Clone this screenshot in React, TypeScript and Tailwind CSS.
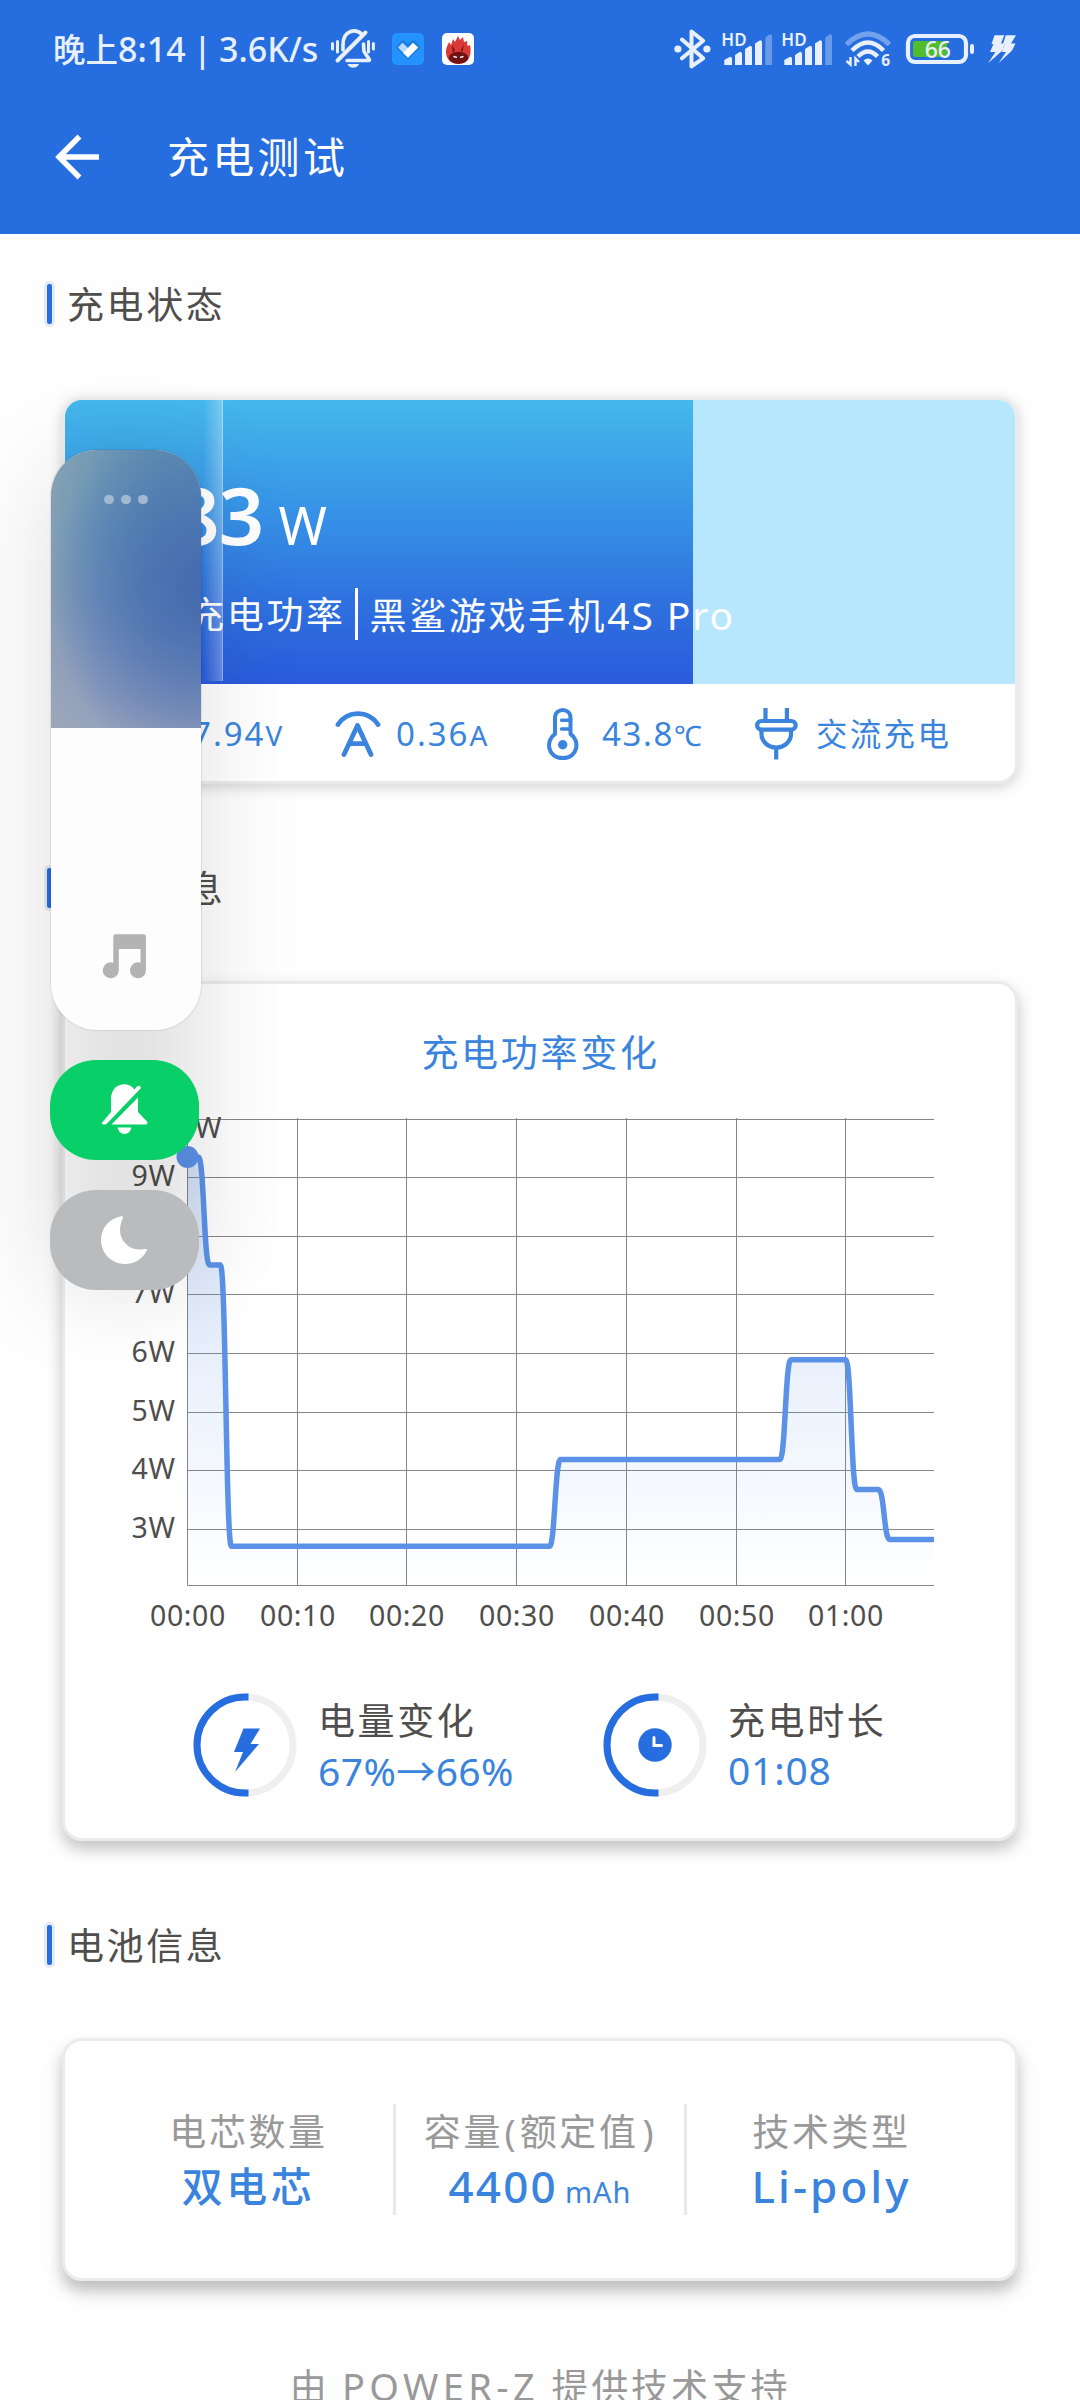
import type { ReactNode } from 'react'

type Point = { minute: number; y: number }

// chart geometry, in page pixels
const CHART_LEFT = 187.5
const CHART_RIGHT = 934
const CHART_BOTTOM = 1585.5
const MINUTE_WIDTH = 10.97

const points: Point[] = [
  { minute: 0, y: 1157 },
  { minute: 1, y: 1157 },
  { minute: 2, y: 1265 },
  { minute: 3, y: 1265 },
  { minute: 4, y: 1546.3 },
  { minute: 33, y: 1546.3 },
  { minute: 34, y: 1459.6 },
  { minute: 54, y: 1459.6 },
  { minute: 55, y: 1359.7 },
  { minute: 60, y: 1359.7 },
  { minute: 61, y: 1489.5 },
  { minute: 63, y: 1489.5 },
  { minute: 64, y: 1539.5 },
  { minute: 68.05, y: 1539.5 },
]

const rows = [
  { y: 1119.5, label: '' },
  { y: 1177.5, label: '9W' },
  { y: 1236.5, label: '8W' },
  { y: 1294.5, label: '7W' },
  { y: 1353.5, label: '6W' },
  { y: 1412.5, label: '5W' },
  { y: 1470.5, label: '4W' },
  { y: 1529.5, label: '3W' },
  { y: 1585.5, label: '' },
]

const columns = [
  { x: 187.5, label: '00:00' },
  { x: 297.5, label: '00:10' },
  { x: 406.5, label: '00:20' },
  { x: 516.5, label: '00:30' },
  { x: 626.5, label: '00:40' },
  { x: 736.5, label: '00:50' },
  { x: 845.5, label: '01:00' },
]

const px = (minute: number) => CHART_LEFT + minute * MINUTE_WIDTH

const linePath = points.reduce((d, p, i) => {
  if (i === 0) return `M${px(p.minute)} ${p.y}`
  const prev = points[i - 1]
  const mid = (px(prev.minute) + px(p.minute)) / 2
  return `${d} C${mid} ${prev.y} ${mid} ${p.y} ${px(p.minute)} ${p.y}`
}, '')

const areaPath = `${linePath} V${CHART_BOTTOM} H${CHART_LEFT} Z`

function MutedBellOutline() {
  return (
    <svg className="h-[40px] w-[46px]" viewBox="330 30 46 40" fill="none" stroke="#e8f0fd" strokeWidth="3.6" strokeLinecap="round">
      <path d="M332.5 44.5V50M337.5 42.5V53M368.5 42.5V53M373.4 44.5V50" strokeWidth="3" />
      <path d="M365.5 33.5L337.5 61.5" strokeWidth="4" />
      <path d="M343 51V45.5C343 31 356 29.5 361.5 35M363.500 45L364 52.5L369 60Q370 61.5 368.500 61.5H347" />
      <path d="M347.5 65H359Q357.5 68.800 353.2 68.800T347.5 65Z" fill="#e8f0fd" stroke="none" />
    </svg>
  )
}

function HeartApp() {
  return (
    <svg className="ml-[16px] h-[32px] w-[32px]" viewBox="0 0 32 32">
      <rect width="32" height="32" rx="5" fill="#2493ff" />
      <path d="M3.500 14.500L9.500 7.500H12.500L16 11L20 7.500H23L28.500 14.500L16 27Z" fill="#1b7fe0" />
      <path d="M6 14.500L10.500 9.700L16.500 15.500L11.500 20Z" fill="#b9dbfb" />
      <path d="M11 20L21 9.700L26.200 14.500L16 24.700Z" fill="#fff" />
    </svg>
  )
}

function FlameApp() {
  return (
    <svg className="ml-[18px] h-[32px] w-[32px]" viewBox="0 0 32 32">
      <rect width="32" height="32" rx="5" fill="#fff" />
      <path d="M16 31C8 31 4 25 4 19C4 14 6 12 7 9L9 12L11 6L13 9L16 3L18 7L21 4L22 9L25 8L25.500 13L28 12C30 22 27 31 16 31Z" fill="#d93a36" />
      <path d="M11 20L10 12L13 17ZM20 20L22 11L19 17Z" fill="#6e1214" />
      <ellipse cx="16.500" cy="24.800" rx="9.800" ry="6" fill="#6e1214" />
      <path d="M11.500 23.500L15 24.300M21.500 23.500L18 24.300" stroke="#fff" strokeWidth="1.300" />
    </svg>
  )
}

function BluetoothIcon() {
  return (
    <svg className="h-[40px] w-[37px]" viewBox="674.500 29 37 40" fill="none" stroke="#e8f0fd" strokeWidth="4" strokeLinecap="round" strokeLinejoin="round">
      <path d="M682.500 39.500L703.600 58.300L692 66.300V31.500L703.600 40.700L682.500 58.300" />
      <circle cx="678.400" cy="49" r="3.600" fill="#e8f0fd" stroke="none" />
      <circle cx="707.400" cy="49" r="3.600" fill="#e8f0fd" stroke="none" />
    </svg>
  )
}

function SignalIcon() {
  return (
    <svg className="h-[44px] w-[52px]" viewBox="721 27 52 44" fill="#e8f0fd">
      <text x="721.300" y="45.500" className="text-[17px] font-semibold">HD</text>
      <path d="M724.300 65V60L730 56.700Q732 56.700 732 58.500V65Z" />
      <path d="M735 65V55L740 51.700Q742 51.700 742 53.500V65Z" />
      <path d="M745 65V49L750 45.700Q752 45.700 752 47.500V65Z" />
      <path d="M755 65V43.500L760 40.200Q762 40.200 762 42V65Z" />
      <path d="M765.300 65V37.500L770 34.300Q772 34.300 772 36V65Z" opacity=".35" />
    </svg>
  )
}

function WifiIcon() {
  return (
    <svg className="ml-[11px] h-[44px] w-[49px]" viewBox="844 28 49 44" fill="none" stroke="#e8f0fd" strokeWidth="4.500">
      <path d="M846.500 45.500Q868 24.500 889.500 45.500" opacity=".4" strokeWidth="5" />
      <path d="M852 51.500Q868 35.500 883.500 51.500" />
      <path d="M858 57.500Q868 47.500 877.500 57.500" />
      <path d="M863.500 61.500Q868 57.500 872.500 61.500L868 66.500Z" fill="#e8f0fd" stroke="none" />
      <path d="M850.500 58V65.500L846.500 62M855.500 67V59.500L859 63" strokeWidth="2.400" />
      <text x="881.300" y="67" className="text-[15.500px] font-bold" fill="#e8f0fd" stroke="none">6</text>
    </svg>
  )
}

function BatteryIcon() {
  return (
    <svg className="ml-[12px] h-[32px] w-[70px]" viewBox="905 33 70 32">
      <rect x="908" y="36" width="58" height="26" rx="7" fill="none" stroke="#e8f0fd" strokeWidth="4.200" />
      <rect x="913" y="41" width="34" height="16" rx="2" fill="#52bd2b" />
      <rect x="970" y="44" width="4" height="10" rx="2" fill="#e8f0fd" />
      <text x="937.800" y="57.700" textAnchor="middle" className="text-[23px] font-medium" fill="#e8f0fd">66</text>
    </svg>
  )
}

function FlashIcon() {
  return (
    <svg className="ml-[13px] h-[30px] w-[29px]" viewBox="988 34 29 30" fill="#e8f0fd">
      <path d="M994.500 35.300H1004.300L1001 43.500H1004.500L1002.500 50.500L988 63.300L995.500 52H990L993.500 44H991.500Z" />
      <path d="M1005.800 35.300H1016L1011 43.500H1015.500L1012 50.500L998.500 63.300L1006 52H1002L1004.500 44H1003Z" />
    </svg>
  )
}

function CurrentIcon() {
  return (
    <svg className="h-[48px] w-[46px]" viewBox="335.500 710 46 48" fill="none" stroke="#3a84dd" strokeWidth="4.800" strokeLinecap="round" strokeLinejoin="round">
      <path d="M338.500 724.500C348 710 369 710 378.500 724.500" />
      <path d="M344.500 754.500L358 725.500L371.500 754.500M350 743.700H366" />
    </svg>
  )
}

function ThermometerIcon() {
  return (
    <svg className="h-[54px] w-[33px]" viewBox="546 707 33 54" fill="none" stroke="#3a84dd" strokeWidth="4" strokeLinecap="round">
      <path d="M555 718C555 707.300 570.500 707.300 570.500 718V734C580 740 578.500 758 562.700 758S545.500 740 555 734Z" strokeLinejoin="round" />
      <path d="M561.500 720.300H570M561.500 729H570" strokeWidth="3.400" />
      <circle cx="562.700" cy="744.700" r="4.700" fill="#3a84dd" stroke="none" />
    </svg>
  )
}

function PlugIcon() {
  return (
    <svg className="h-[53px] w-[45px]" viewBox="754.500 707 45 53" fill="none" stroke="#3a84dd" strokeWidth="4.200">
      <path d="M766 708V720M787.400 708V720M776.700 748V759.500" />
      <rect x="757.600" y="721" width="38.600" height="8.600" rx="4.300" />
      <path d="M762 730V734C762 741 768 747.500 776.700 747.500S791.500 741 791.500 734V730" />
    </svg>
  )
}

function Ring({ children }: { children: ReactNode }) {
  return (
    <svg className="h-[104px] w-[104px] shrink-0" viewBox="0 0 104 104">
      <circle cx="52" cy="52" r="48" fill="none" stroke="#efefef" strokeWidth="7" />
      <path d="M55.500 4H52A48 48 0 0 0 52 100H55.500" fill="none" stroke="#266de0" strokeWidth="7" />
      {children}
    </svg>
  )
}

function SectionTitle({ title }: { title: string }) {
  return (
    <div className="flex h-[46px] items-center pl-[44px]">
      <span className="h-[46px] w-[11px] rounded-[5px] border-[3px] border-[#e6eaf3] bg-[#266de0]" />
      <h2 className="ml-[12px] text-[37px] leading-none tracking-[2.600px] text-[#4f4e4c]">{title}</h2>
    </div>
  )
}

function PowerChart() {
  return (
    <svg className="block h-[540px] w-[950px]" viewBox="65 1100 950 540">
      <defs>
        <linearGradient id="area" gradientUnits="userSpaceOnUse" x1="0" y1="1120" x2="0" y2="1585">
          <stop offset="0" stopColor="#5b93ea" stopOpacity=".28" />
          <stop offset=".5" stopColor="#5b93ea" stopOpacity=".14" />
          <stop offset="1" stopColor="#5b93ea" stopOpacity="0" />
        </linearGradient>
      </defs>
      <g stroke="#868686" strokeWidth="1">
        {rows.map(r => <path key={r.y} d={`M${CHART_LEFT} ${r.y}H${CHART_RIGHT}`} />)}
        {columns.map(c => <path key={c.x} d={`M${c.x} 1118V${CHART_BOTTOM}`} />)}
      </g>
      <path d={areaPath} fill="url(#area)" />
      <path d={linePath} fill="none" stroke="#5b92e8" strokeWidth="5.500" />
      <circle cx={CHART_LEFT} cy="1157" r="11" fill="#5b92e8" />
      <g className="text-[28.500px]" fill="#4f4e4c">
        <text x="221.500" y="1138" textAnchor="end">10W</text>
        {rows.map(r => <text key={r.y} x="175.500" y={r.y + 8.500} textAnchor="end" letterSpacing=".600">{r.label}</text>)}
        {columns.map(c => <text key={c.x} x={c.x + 0.5} y="1625.500" textAnchor="middle" letterSpacing=".600">{c.label}</text>)}
      </g>
    </svg>
  )
}

function VolumePanel() {
  return (
    <div className="absolute left-[50px] top-[450px] w-[152px]">
      {/* soft shadow behind the whole stack */}
      <div className="absolute left-0 top-[20px] h-[820px] w-[152px] rounded-[48px] bg-black/12 blur-[48px]" />
      <div className="relative ml-px flex h-[580px] w-[150px] flex-col overflow-hidden rounded-[46px] bg-[#fdfdfd] shadow-[0_0_1px_1px_rgba(0,0,0,0.080)]">
        <div className="flex h-[278px] justify-center gap-[7.500px] bg-[radial-gradient(ellipse_150px_185px_at_100%_50%,#456aae_0%,rgba(72,110,175,0.700)_40%,rgba(80,120,178,0)_100%),linear-gradient(90deg,rgba(165,175,182,0.550)_0%,rgba(150,170,190,0.250)_35%,rgba(120,150,190,0)_70%),linear-gradient(180deg,#6292b0_0%,#568bb4_30%,#6388b8_55%,#7c90bc_75%,#959fbb_100%)] pt-[44.500px]">
          <span className="size-[9.500px] rounded-full bg-[#a0b9d1]" />
          <span className="size-[9.500px] rounded-full bg-[#a0b9d1]" />
          <span className="size-[9.500px] rounded-full bg-[#a0b9d1]" />
        </div>
        <svg className="ml-[51px] mt-[205px] h-[46px] w-[46px]" viewBox="102 933 46 46" fill="#b3b3b3">
          <path d="M113.300 937Q113.300 934.300 116 934.300H143.300Q146 934.300 146 937V970.300A8 8 0 1 1 140.500 962.700V949H118.800V970.300A8 8 0 1 1 113.300 962.700Z" />
        </svg>
      </div>
      <button className="relative mt-[30px] block h-[100px] w-[149px] rounded-[46px] bg-[#08cf67]">
        <svg className="ml-[50px] h-[52px] w-[50px]" viewBox="100 1084 50 52" fill="#fff">
          <path d="M103 1121.500L111 1112V1099C111 1083 128 1080.500 134.500 1089.500L137 1086.500Q140 1084.500 141 1088L106.500 1124Q102.500 1125.500 101.500 1123Z" />
          <path d="M138 1097.500V1112L147 1121.500Q148.500 1124.500 145.500 1124.500H111.500ZM117.500 1127.500H131.500Q130 1134 124.500 1134T117.500 1127.500Z" />
        </svg>
      </button>
      <button className="relative mt-[30px] block h-[100px] w-[149px] rounded-[46px] bg-[#b9bbbc]">
        <svg className="ml-[50px] h-[52px] w-[50px]" viewBox="100 1214 50 52" fill="#fff">
          <path d="M121 1216.300Q124 1215.500 122.500 1219C114 1238 129 1252.500 144.500 1249Q148 1248 146.500 1251C142 1260 133.500 1264 125 1264C111.500 1264 101 1253 101 1240C101 1228 109.500 1218.500 121 1216.300Z" />
        </svg>
      </button>
    </div>
  )
}

export default function App() {
  return (
    <div className="relative h-[2400px] w-[1080px] overflow-hidden bg-[#fefefe] font-['Noto_Sans','Noto_Sans_CJK_SC',sans-serif]">
      <header className="h-[234px] bg-[#266de0]">
        <div className="flex h-[98px] items-center pl-[53px] text-[#e8f0fd]">
          <span className="w-[277px] whitespace-nowrap text-[34px] font-medium leading-none [word-spacing:-1.500px]"><span className="text-[32.500px]">晚上</span>8:14 | 3.6K/s</span>
          <MutedBellOutline />
          <HeartApp />
          <FlameApp />
          <div className="ml-auto flex items-center pr-[63px]">
            <BluetoothIcon />
            <span className="ml-[10px] flex gap-[8px]">
              <SignalIcon />
              <SignalIcon />
            </span>
            <WifiIcon />
            <BatteryIcon />
            <FlashIcon />
          </div>
        </div>
        <div className="flex h-[118px] items-center pl-[54px] text-white">
          <svg className="h-[46px] w-[46px]" viewBox="0 0 46 46" fill="none" stroke="#fff" strokeWidth="5.500">
            <path d="M25.500 2.500L5 23L25.500 43.500M4 23H45" />
          </svg>
          <h1 className="ml-[67px] text-[42px] leading-none tracking-[3.300px]">充电测试</h1>
        </div>
      </header>

      <main className="pt-[47px]">
        <SectionTitle title="充电状态" />
        <section className="mx-[62px] mt-[70px] h-[387px] overflow-hidden rounded-[20px] border-[3px] border-[#ebebeb] bg-white shadow-[0_3px_14px_rgba(0,0,0,0.180)]">
          <div className="relative h-[284px] bg-[#b7e7ff]">
            <div className="absolute left-0 top-0 h-full w-[628px] bg-[linear-gradient(180deg,#44b8eb_0%,#3690e6_42%,#2f72df_70%,#2a5bdc_100%)]" />
            <div className="relative pl-[43px] pt-[74px] text-white">
              <div className="flex h-[84px] items-baseline">
                <span className="text-[80px] font-semibold leading-none tracking-[-1px]">2.83</span>
                <span className="ml-[15px] text-[52px] leading-none">W</span>
              </div>
              <div className="mt-[30px] flex h-[52px] items-center text-[37px] leading-none tracking-[2.600px]">
                <span>实时充电功率</span>
                <span className="ml-[9px] h-[52px] w-[3px] bg-white" />
                <span className="ml-[12px] whitespace-nowrap">黑鲨游戏手机<span className="text-[39px] tracking-[1.900px]">4S Pro</span></span>
              </div>
            </div>
            <div className="absolute left-[138px] top-0 h-[281px] w-[20px] border-r border-white/50 bg-linear-to-r from-white/0 to-white/30" />
          </div>
          <div className="flex h-[97px] items-center pl-[127px] pt-[2px] text-[33px] leading-none text-[#3a84dd]">
            <span className="w-[143px] tracking-[2px]">7.94<span className="text-[28px]">V</span></span>
            <CurrentIcon />
            <span className="ml-[15px] w-[150px] tracking-[2px]">0.36<span className="text-[28px]">A</span></span>
            <ThermometerIcon />
            <span className="ml-[23px] w-[152px] tracking-[1.600px]">43.8<span className="text-[28px]">℃</span></span>
            <PlugIcon />
            <span className="ml-[17px] text-[31.500px] tracking-[2.300px]">交流充电</span>
          </div>
        </section>

        <div className="mt-[81px]">
          <SectionTitle title="充电信息" />
        </div>
        <section className="mx-[62px] mt-[70px] h-[860px] rounded-[20px] border-[3px] border-[#ebebeb] bg-white shadow-[0_8px_16px_rgba(0,0,0,0.240)]">
          <h3 className="h-[116px] pl-px pt-[50px] text-center text-[37px] leading-none tracking-[2.700px] text-[#3a84dd]">充电功率变化</h3>
          <PowerChart />
          <div className="mt-[53px] flex pl-[128px]">
            <div className="flex w-[410px]">
              <Ring>
                <path d="M50.500 35.500H67L57.500 51H66L42 79L50 59H41Z" fill="#266de0" />
              </Ring>
              <div className="ml-[21px] text-[37px] leading-none">
                <div className="mt-[9px] tracking-[2.600px] text-[#4f4e4c]">电量变化</div>
                <div className="mt-[11px] whitespace-nowrap text-[39px] tracking-[0.400px] text-[#3a84dd]">67%<span className="font-['Noto_Sans_CJK_SC',sans-serif]">→</span>66%</div>
              </div>
            </div>
            <div className="flex">
              <Ring>
                <circle cx="52" cy="52" r="16.700" fill="#266de0" />
                <path d="M51 44.500V52.500H58.500" fill="none" stroke="#fff" strokeWidth="3" strokeLinecap="round" />
              </Ring>
              <div className="ml-[21px] text-[37px] leading-none">
                <div className="mt-[9px] tracking-[2.600px] text-[#4f4e4c]">充电时长</div>
                <div className="mt-[11px] text-[39px] tracking-[0.800px] text-[#3a84dd]">01:08</div>
              </div>
            </div>
          </div>
        </section>

        <div className="mt-[81px]">
          <SectionTitle title="电池信息" />
        </div>
        <section className="mx-[62px] mt-[70px] flex h-[243px] rounded-[20px] border-[3px] border-[#ebebeb] bg-white pl-[39px] pt-[63px] text-center text-[37px] leading-none tracking-[2.600px] shadow-[0_10px_16px_rgba(0,0,0,0.260)]">
          <div className="h-[111px] w-[292px] border-r-[3px] border-[#e8e8e8] pt-[9px]">
            <div className="text-[#999]">电芯数量</div>
            <div className="mt-[16px] text-[41px] font-medium tracking-[3.500px] text-[#3a84dd]">双电芯</div>
          </div>
          <div className="h-[111px] w-[291px] border-r-[3px] border-[#e8e8e8] pt-[9px]">
            <div className="whitespace-nowrap text-[#999]">容量<span className="mx-[1.500px]">(</span>额定值<span className="ml-[4px]">)</span></div>
            <div className="mt-[14px] text-[44px] font-medium tracking-[2.200px] text-[#3a84dd]">4400<span className="ml-[7px] text-[29px] font-normal tracking-[1px]">mAh</span></div>
          </div>
          <div className="h-[111px] w-[289px] pt-[9px]">
            <div className="text-[#999]">技术类型</div>
            <div className="mt-[14px] text-[44px] font-medium tracking-[3px] text-[#3a84dd]">Li-poly</div>
          </div>
        </section>
        <p className="mt-[86px] whitespace-nowrap text-center text-[37px] leading-none tracking-[2.800px] text-[#999]">由 <span className="text-[38px] tracking-[4.400px]">POWER-Z</span> 提供技术支持</p>
      </main>

      <VolumePanel />
    </div>
  )
}
